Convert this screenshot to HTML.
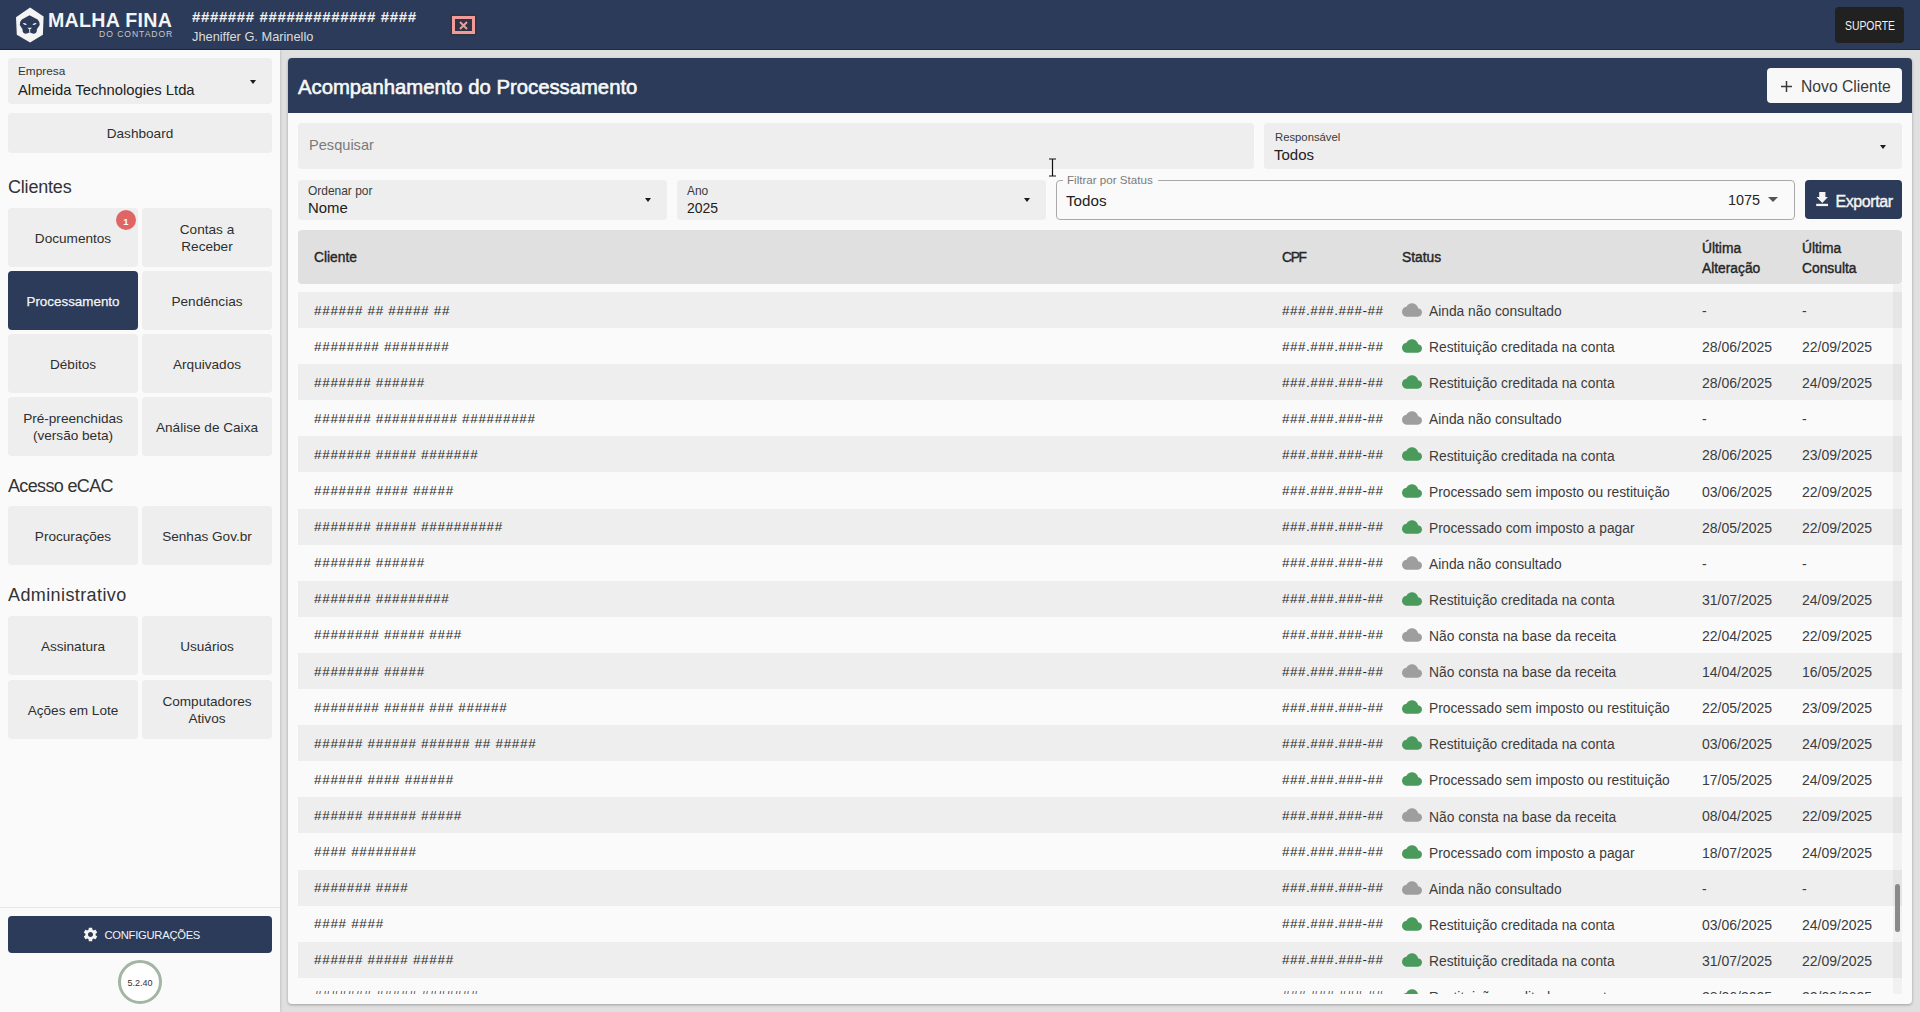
<!DOCTYPE html>
<html><head><meta charset="utf-8">
<style>
*{box-sizing:border-box;margin:0;padding:0}
html,body{width:1920px;height:1012px;overflow:hidden}
body{position:relative;background:#e0e0e0;font-family:"Liberation Sans",sans-serif;color:#212121}
.abs{position:absolute}
.t{position:absolute;white-space:nowrap;line-height:1}
#hdr{left:0;top:0;width:1920px;height:50px;background:#2b3b59;border-bottom:1px solid #1e2a40}
#side{left:0;top:50px;width:280px;height:962px;background:#fafafa;box-shadow:1px 0 2px rgba(0,0,0,.12)}
.btn{position:absolute;background:#eeeeee;border-radius:4px;display:flex;align-items:center;justify-content:center;text-align:center;font-size:13.6px;line-height:17px;color:#2e2e2e;padding-top:1.5px}
.sec{position:absolute;left:8px;font-size:18px;color:#333;white-space:nowrap;line-height:1}
#card{left:288px;top:58px;width:1624px;height:946px;background:#fafafa;border-radius:4px;box-shadow:0 1px 3px rgba(0,0,0,.3);overflow:hidden}
#chdr{left:0;top:0;width:1624px;height:55px;background:#2b3b59}
.fld{position:absolute;background:#eeeeee;border-radius:4px}
.lbl{position:absolute;font-size:12px;color:#3a3a3a;white-space:nowrap;line-height:1}
.val{position:absolute;font-size:15px;color:#212121;white-space:nowrap;line-height:1}
.arr{position:absolute;width:0;height:0;border-left:3.8px solid transparent;border-right:3.8px solid transparent;border-top:4px solid #1a1a1a;margin-top:0.6px}
#thead{left:10px;top:172px;width:1604px;height:54px;background:#e0e0e0;border-radius:4px}
.th{position:absolute;font-size:13.8px;font-weight:400;color:#262626;-webkit-text-stroke:0.4px #262626;white-space:nowrap;line-height:19.6px}
#tbody{left:10px;top:226px;width:1604px;height:710px;overflow:hidden}
.row{position:absolute;left:0;width:1604px;height:36.1px}
.row.g{background:#eeeeee}
.c1,.c2,.c3,.c4,.c5{position:absolute;top:0;line-height:36px;white-space:nowrap;color:#262626}
.c1{left:16px;top:0.5px !important;font-size:13.5px;letter-spacing:0.68px;color:#2a2a2a}
.c2{left:984px;top:0.5px !important;font-size:13.5px;letter-spacing:0.5px;color:#2a2a2a}
.c3{left:1131px;top:2.2px !important;font-size:13.8px;color:#3c3c3c}
.c4{left:1404px;top:1px !important;font-size:14px;color:#3c3c3c}
.c5{left:1504px;top:1px !important;font-size:14px;color:#3c3c3c}
.cl{position:absolute;left:1104px;top:8px;width:20px;height:20px}
</style></head><body>

<!-- HEADER -->
<div id="hdr" class="abs">
  <svg class="abs" style="left:10px;top:4px" width="40" height="42" viewBox="0 0 40 42">
    <polygon points="20.1,3.5 33.6,12.4 32.9,30.7 20.1,38.6 6.8,30.7 6,13.3" fill="#f4f4f4"/>
    <path d="M19.5,11.2 L27.6,15.6 Q29.4,17 29.7,21 L26.9,25.3 Q27,29.6 24,29.7 Q21.5,29.6 19.7,28.2 Q17.9,29.6 15.4,29.7 Q12.4,29.6 12.5,25.3 L9.8,21 Q10.1,17 11.8,15.6 Z" fill="#2b3b59"/>
    <path d="M12.8,19.2 Q15.5,18.6 17,20.6 Q14.5,21.8 12.8,19.2 Z" fill="#f4f4f4"/>
    <path d="M26.6,19.2 Q23.9,18.6 22.4,20.6 Q24.9,21.8 26.6,19.2 Z" fill="#f4f4f4"/>
    <path d="M17.3,23.8 L22.1,23.8 L19.7,25.8 Z" fill="#f4f4f4"/>
    <path d="M19.7,25.3 L19.7,28.3" stroke="#f4f4f4" stroke-width="0.9"/>
  </svg>
  <div class="t" style="left:48px;top:11px;font-size:19.6px;font-weight:700;color:#f4f4f4;letter-spacing:0.3px">MALHA FINA</div>
  <div class="t" style="left:99px;top:30px;font-size:8.6px;color:#c9c9c9;letter-spacing:0.95px">DO CONTADOR</div>
  <div class="t" style="left:192px;top:8.5px;font-size:15px;font-weight:700;color:#f2f2f2;letter-spacing:0.62px">####### ############# ####</div>
  <div class="t" style="left:192px;top:30.5px;font-size:12.8px;color:#dcdcdc">Jheniffer G. Marinello</div>
  <div class="abs" style="left:452px;top:16px;width:23px;height:18px;border:3px solid #f09a9a;background:#2e3444;box-shadow:0 0 0 1.5px #30343f"></div>
  <svg class="abs" style="left:459px;top:21px" width="9" height="9" viewBox="0 0 9 9"><path d="M1,1 L8,8 M8,1 L1,8" stroke="#f29a9a" stroke-width="2"/></svg>
  <div class="abs" style="left:1835px;top:7px;width:69px;height:36px;background:#212121;border-radius:4px"></div>
  <div class="t" style="left:1844.5px;top:19.5px;font-size:12.3px;color:#f4f4f4;transform:scaleX(0.845);transform-origin:0 0">SUPORTE</div>
</div>

<!-- SIDEBAR -->
<div id="side" class="abs">
  <div class="fld" style="left:8px;top:8px;width:264px;height:46px"></div>
  <div class="lbl" style="left:18px;top:16px;font-size:11.8px;color:#333">Empresa</div>
  <div class="val" style="left:18px;top:33px;font-size:14.8px">Almeida Technologies Ltda</div>
  <div class="arr" style="left:250px;top:29px"></div>
  <div class="btn" style="left:8px;top:63px;width:264px;height:40px">Dashboard</div>

  <div class="sec" style="top:128px;letter-spacing:-0.2px">Clientes</div>
  <div class="btn" style="left:8px;top:158px;width:130px;height:59px">Documentos</div>
  <div class="abs" style="left:116px;top:160px;width:20px;height:20px;border-radius:50%;background:#e06666;color:#fff;font-size:9.5px;font-weight:700;line-height:23px;text-align:center">1</div>
  <div class="btn" style="left:142px;top:158px;width:130px;height:59px">Contas a<br>Receber</div>
  <div class="btn" style="left:8px;top:221px;width:130px;height:59px;background:#2b3b59;color:#f4f4f4;font-size:13.4px;-webkit-text-stroke:0.25px #f4f4f4">Processamento</div>
  <div class="btn" style="left:142px;top:221px;width:130px;height:59px">Pendências</div>
  <div class="btn" style="left:8px;top:284px;width:130px;height:59px">Débitos</div>
  <div class="btn" style="left:142px;top:284px;width:130px;height:59px">Arquivados</div>
  <div class="btn" style="left:8px;top:347px;width:130px;height:59px">Pré-preenchidas<br>(versão beta)</div>
  <div class="btn" style="left:142px;top:347px;width:130px;height:59px">Análise de Caixa</div>

  <div class="sec" style="top:427px;letter-spacing:-0.65px">Acesso eCAC</div>
  <div class="btn" style="left:8px;top:456px;width:130px;height:59px">Procurações</div>
  <div class="btn" style="left:142px;top:456px;width:130px;height:59px">Senhas Gov.br</div>

  <div class="sec" style="top:536px;letter-spacing:0.4px">Administrativo</div>
  <div class="btn" style="left:8px;top:566px;width:130px;height:59px">Assinatura</div>
  <div class="btn" style="left:142px;top:566px;width:130px;height:59px">Usuários</div>
  <div class="btn" style="left:8px;top:630px;width:130px;height:59px">Ações em Lote</div>
  <div class="btn" style="left:142px;top:630px;width:130px;height:59px">Computadores<br>Ativos</div>

  <div class="abs" style="left:0;top:857px;width:280px;height:1px;background:#e6e6e6"></div>
  <div class="abs" style="left:8px;top:866px;width:264px;height:37px;background:#2b3b59;border-radius:4px"></div>
  <svg class="abs" style="left:82px;top:876px" width="17" height="17" viewBox="0 0 24 24"><path fill="#f4f4f4" d="M19.14,12.94c.04-.3.06-.61.06-.94 0-.32-.02-.64-.07-.94l2.03-1.58c.18-.14.23-.41.12-.61l-1.92-3.32c-.12-.22-.37-.29-.59-.22l-2.39.96c-.5-.38-1.03-.7-1.62-.94l-.36-2.54c-.04-.24-.24-.41-.48-.41h-3.84c-.24 0-.43.17-.47.41l-.36,2.54c-.59.24-1.13.57-1.62.94l-2.39-.96c-.22-.08-.47,0-.59.22L2.74,8.87c-.12.21-.08.47.12.61l2.03,1.58c-.05.3-.09.63-.09.94s.02.64.07.94l-2.03,1.58c-.18.14-.23.41-.12.61l1.92,3.32c.12.22.37.29.59.22l2.39-.96c.5.38,1.03.7,1.62.94l.36,2.54c.05.24.24.41.48.41h3.84c.24,0,.44-.17.47-.41l.36-2.54c.59-.24,1.13-.56,1.62-.94l2.39.96c.22.08.47,0,.59-.22l1.92-3.32c.12-.22.07-.47-.12-.61l-2.01-1.58zM12,15.6c-1.98,0-3.6-1.62-3.6-3.6s1.62-3.6,3.6-3.6,3.6,1.62,3.6,3.6-1.62,3.6-3.6,3.6z"/></svg>
  <div class="t" style="left:104.5px;top:879.5px;font-size:11.2px;color:#f4f4f4;letter-spacing:-0.25px">CONFIGURAÇÕES</div>
  <div class="abs" style="left:118px;top:910px;width:44px;height:44px;border-radius:50%;border:3px solid #a3b5a3;background:#fff"></div>
  <div class="t" style="left:127.5px;top:929px;font-size:9px;color:#333">5.2.40</div>
</div>

<!-- MAIN CARD -->
<div id="card" class="abs">
  <div id="chdr" class="abs">
    <div class="t" style="left:10px;top:18.5px;font-size:20.3px;font-weight:400;color:#f8f8f8;-webkit-text-stroke:0.6px #f8f8f8">Acompanhamento do Processamento</div>
    <div class="abs" style="left:1479px;top:10px;width:135px;height:35px;background:#f8f8f8;border-radius:4px"></div>
    <svg class="abs" style="left:1493px;top:23px" width="11" height="11" viewBox="0 0 11 11"><path d="M5.5,0 V11 M0,5.5 H11" stroke="#3a3a3a" stroke-width="1.5"/></svg>
    <div class="t" style="left:1513px;top:21px;font-size:15.7px;color:#3a3a3a">Novo Cliente</div>
  </div>

  <div class="fld" style="left:10px;top:65px;width:956px;height:46px"></div>
  <div class="val" style="left:21px;top:80px;font-size:14.6px;color:#7a7a7a">Pesquisar</div>

  <div class="fld" style="left:976px;top:65px;width:638px;height:46px"></div>
  <div class="lbl" style="left:987px;top:74px;font-size:11.3px">Responsável</div>
  <div class="val" style="left:986px;top:89px;font-size:15px">Todos</div>
  <div class="arr" style="left:1592px;top:86px"></div>

  <div class="fld" style="left:10px;top:122px;width:369px;height:40px"></div>
  <div class="lbl" style="left:20px;top:128px;font-size:11.96px">Ordenar por</div>
  <div class="val" style="left:20px;top:143px;font-size:14.9px">Nome</div>
  <div class="arr" style="left:357px;top:139px"></div>

  <div class="fld" style="left:389px;top:122px;width:369px;height:40px"></div>
  <div class="lbl" style="left:399px;top:128px;font-size:11.96px">Ano</div>
  <div class="val" style="left:399px;top:143px;font-size:14px">2025</div>
  <div class="arr" style="left:736px;top:139px"></div>

  <div class="abs" style="left:768px;top:122px;width:739px;height:39.5px;border:1px solid #a9a9a9;border-radius:4px"></div>
  <div class="abs" style="left:775px;top:118px;width:95px;height:8px;background:#fafafa"></div>
  <div class="lbl" style="left:779px;top:116px;font-size:11.6px;color:#7a7a7a">Filtrar por Status</div>
  <div class="val" style="left:778px;top:135px;font-size:15.2px">Todos</div>
  <div class="val" style="left:1440px;top:135px;font-size:14.4px;color:#262626">1075</div>
  <div class="arr" style="left:1480px;top:138px;border-left-width:5px;border-right-width:5px;border-top:5px solid #555"></div>

  <div class="abs" style="left:1517px;top:122px;width:97px;height:39px;background:#2b3b59;border-radius:4px"></div>
  <svg class="abs" style="left:1528px;top:134px" width="12" height="15" viewBox="0 0 12 15"><path d="M3.2,0 H9.4 V5 H11.9 L6.3,10.9 L0.5,5 H3.2 Z" fill="#f4f4f4"/><rect x="0.2" y="11.8" width="11.8" height="2.3" fill="#f4f4f4"/></svg>
  <div class="t" style="left:1547.5px;top:135.5px;font-size:16px;letter-spacing:-0.4px;font-weight:400;color:#f4f4f4;-webkit-text-stroke:0.4px #f4f4f4">Exportar</div>

  <div id="thead" class="abs">
    <div class="th" style="left:16px;top:18px">Cliente</div>
    <div class="th" style="left:984px;top:18px;letter-spacing:-1.3px">CPF</div>
    <div class="th" style="left:1104px;top:18px">Status</div>
    <div class="th" style="left:1404px;top:9px">Última<br>Alteração</div>
    <div class="th" style="left:1504px;top:9px">Última<br>Consulta</div>
  </div>

  <div id="tbody" class="abs">
    <div class="row g" style="top:8.00px"><div class="c1">###### ## ##### ##</div><div class="c2">###.###.###-##</div><svg class="cl" viewBox="0 0 24 24"><path fill="#9e9e9e" d="M19.35 10.04C18.67 6.59 15.64 4 12 4 9.11 4 6.6 5.64 5.35 8.04 2.34 8.36 0 10.91 0 14c0 3.31 2.69 6 6 6h13c2.76 0 5-2.24 5-5 0-2.64-2.05-4.78-4.65-4.96z"/></svg><div class="c3">Ainda não consultado</div><div class="c4">-</div><div class="c5">-</div></div>
    <div class="row" style="top:44.10px"><div class="c1">######## ########</div><div class="c2">###.###.###-##</div><svg class="cl" viewBox="0 0 24 24"><path fill="#4a9a5c" d="M19.35 10.04C18.67 6.59 15.64 4 12 4 9.11 4 6.6 5.64 5.35 8.04 2.34 8.36 0 10.91 0 14c0 3.31 2.69 6 6 6h13c2.76 0 5-2.24 5-5 0-2.64-2.05-4.78-4.65-4.96z"/></svg><div class="c3">Restituição creditada na conta</div><div class="c4">28/06/2025</div><div class="c5">22/09/2025</div></div>
    <div class="row g" style="top:80.20px"><div class="c1">####### ######</div><div class="c2">###.###.###-##</div><svg class="cl" viewBox="0 0 24 24"><path fill="#4a9a5c" d="M19.35 10.04C18.67 6.59 15.64 4 12 4 9.11 4 6.6 5.64 5.35 8.04 2.34 8.36 0 10.91 0 14c0 3.31 2.69 6 6 6h13c2.76 0 5-2.24 5-5 0-2.64-2.05-4.78-4.65-4.96z"/></svg><div class="c3">Restituição creditada na conta</div><div class="c4">28/06/2025</div><div class="c5">24/09/2025</div></div>
    <div class="row" style="top:116.30px"><div class="c1">####### ########## #########</div><div class="c2">###.###.###-##</div><svg class="cl" viewBox="0 0 24 24"><path fill="#9e9e9e" d="M19.35 10.04C18.67 6.59 15.64 4 12 4 9.11 4 6.6 5.64 5.35 8.04 2.34 8.36 0 10.91 0 14c0 3.31 2.69 6 6 6h13c2.76 0 5-2.24 5-5 0-2.64-2.05-4.78-4.65-4.96z"/></svg><div class="c3">Ainda não consultado</div><div class="c4">-</div><div class="c5">-</div></div>
    <div class="row g" style="top:152.40px"><div class="c1">####### ##### #######</div><div class="c2">###.###.###-##</div><svg class="cl" viewBox="0 0 24 24"><path fill="#4a9a5c" d="M19.35 10.04C18.67 6.59 15.64 4 12 4 9.11 4 6.6 5.64 5.35 8.04 2.34 8.36 0 10.91 0 14c0 3.31 2.69 6 6 6h13c2.76 0 5-2.24 5-5 0-2.64-2.05-4.78-4.65-4.96z"/></svg><div class="c3">Restituição creditada na conta</div><div class="c4">28/06/2025</div><div class="c5">23/09/2025</div></div>
    <div class="row" style="top:188.50px"><div class="c1">####### #### #####</div><div class="c2">###.###.###-##</div><svg class="cl" viewBox="0 0 24 24"><path fill="#4a9a5c" d="M19.35 10.04C18.67 6.59 15.64 4 12 4 9.11 4 6.6 5.64 5.35 8.04 2.34 8.36 0 10.91 0 14c0 3.31 2.69 6 6 6h13c2.76 0 5-2.24 5-5 0-2.64-2.05-4.78-4.65-4.96z"/></svg><div class="c3">Processado sem imposto ou restituição</div><div class="c4">03/06/2025</div><div class="c5">22/09/2025</div></div>
    <div class="row g" style="top:224.60px"><div class="c1">####### ##### ##########</div><div class="c2">###.###.###-##</div><svg class="cl" viewBox="0 0 24 24"><path fill="#4a9a5c" d="M19.35 10.04C18.67 6.59 15.64 4 12 4 9.11 4 6.6 5.64 5.35 8.04 2.34 8.36 0 10.91 0 14c0 3.31 2.69 6 6 6h13c2.76 0 5-2.24 5-5 0-2.64-2.05-4.78-4.65-4.96z"/></svg><div class="c3">Processado com imposto a pagar</div><div class="c4">28/05/2025</div><div class="c5">22/09/2025</div></div>
    <div class="row" style="top:260.70px"><div class="c1">####### ######</div><div class="c2">###.###.###-##</div><svg class="cl" viewBox="0 0 24 24"><path fill="#9e9e9e" d="M19.35 10.04C18.67 6.59 15.64 4 12 4 9.11 4 6.6 5.64 5.35 8.04 2.34 8.36 0 10.91 0 14c0 3.31 2.69 6 6 6h13c2.76 0 5-2.24 5-5 0-2.64-2.05-4.78-4.65-4.96z"/></svg><div class="c3">Ainda não consultado</div><div class="c4">-</div><div class="c5">-</div></div>
    <div class="row g" style="top:296.80px"><div class="c1">####### #########</div><div class="c2">###.###.###-##</div><svg class="cl" viewBox="0 0 24 24"><path fill="#4a9a5c" d="M19.35 10.04C18.67 6.59 15.64 4 12 4 9.11 4 6.6 5.64 5.35 8.04 2.34 8.36 0 10.91 0 14c0 3.31 2.69 6 6 6h13c2.76 0 5-2.24 5-5 0-2.64-2.05-4.78-4.65-4.96z"/></svg><div class="c3">Restituição creditada na conta</div><div class="c4">31/07/2025</div><div class="c5">24/09/2025</div></div>
    <div class="row" style="top:332.90px"><div class="c1">######## ##### ####</div><div class="c2">###.###.###-##</div><svg class="cl" viewBox="0 0 24 24"><path fill="#9e9e9e" d="M19.35 10.04C18.67 6.59 15.64 4 12 4 9.11 4 6.6 5.64 5.35 8.04 2.34 8.36 0 10.91 0 14c0 3.31 2.69 6 6 6h13c2.76 0 5-2.24 5-5 0-2.64-2.05-4.78-4.65-4.96z"/></svg><div class="c3">Não consta na base da receita</div><div class="c4">22/04/2025</div><div class="c5">22/09/2025</div></div>
    <div class="row g" style="top:369.00px"><div class="c1">######## #####</div><div class="c2">###.###.###-##</div><svg class="cl" viewBox="0 0 24 24"><path fill="#9e9e9e" d="M19.35 10.04C18.67 6.59 15.64 4 12 4 9.11 4 6.6 5.64 5.35 8.04 2.34 8.36 0 10.91 0 14c0 3.31 2.69 6 6 6h13c2.76 0 5-2.24 5-5 0-2.64-2.05-4.78-4.65-4.96z"/></svg><div class="c3">Não consta na base da receita</div><div class="c4">14/04/2025</div><div class="c5">16/05/2025</div></div>
    <div class="row" style="top:405.10px"><div class="c1">######## ##### ### ######</div><div class="c2">###.###.###-##</div><svg class="cl" viewBox="0 0 24 24"><path fill="#4a9a5c" d="M19.35 10.04C18.67 6.59 15.64 4 12 4 9.11 4 6.6 5.64 5.35 8.04 2.34 8.36 0 10.91 0 14c0 3.31 2.69 6 6 6h13c2.76 0 5-2.24 5-5 0-2.64-2.05-4.78-4.65-4.96z"/></svg><div class="c3">Processado sem imposto ou restituição</div><div class="c4">22/05/2025</div><div class="c5">23/09/2025</div></div>
    <div class="row g" style="top:441.20px"><div class="c1">###### ###### ###### ## #####</div><div class="c2">###.###.###-##</div><svg class="cl" viewBox="0 0 24 24"><path fill="#4a9a5c" d="M19.35 10.04C18.67 6.59 15.64 4 12 4 9.11 4 6.6 5.64 5.35 8.04 2.34 8.36 0 10.91 0 14c0 3.31 2.69 6 6 6h13c2.76 0 5-2.24 5-5 0-2.64-2.05-4.78-4.65-4.96z"/></svg><div class="c3">Restituição creditada na conta</div><div class="c4">03/06/2025</div><div class="c5">24/09/2025</div></div>
    <div class="row" style="top:477.30px"><div class="c1">###### #### ######</div><div class="c2">###.###.###-##</div><svg class="cl" viewBox="0 0 24 24"><path fill="#4a9a5c" d="M19.35 10.04C18.67 6.59 15.64 4 12 4 9.11 4 6.6 5.64 5.35 8.04 2.34 8.36 0 10.91 0 14c0 3.31 2.69 6 6 6h13c2.76 0 5-2.24 5-5 0-2.64-2.05-4.78-4.65-4.96z"/></svg><div class="c3">Processado sem imposto ou restituição</div><div class="c4">17/05/2025</div><div class="c5">24/09/2025</div></div>
    <div class="row g" style="top:513.40px"><div class="c1">###### ###### #####</div><div class="c2">###.###.###-##</div><svg class="cl" viewBox="0 0 24 24"><path fill="#9e9e9e" d="M19.35 10.04C18.67 6.59 15.64 4 12 4 9.11 4 6.6 5.64 5.35 8.04 2.34 8.36 0 10.91 0 14c0 3.31 2.69 6 6 6h13c2.76 0 5-2.24 5-5 0-2.64-2.05-4.78-4.65-4.96z"/></svg><div class="c3">Não consta na base da receita</div><div class="c4">08/04/2025</div><div class="c5">22/09/2025</div></div>
    <div class="row" style="top:549.50px"><div class="c1">#### ########</div><div class="c2">###.###.###-##</div><svg class="cl" viewBox="0 0 24 24"><path fill="#4a9a5c" d="M19.35 10.04C18.67 6.59 15.64 4 12 4 9.11 4 6.6 5.64 5.35 8.04 2.34 8.36 0 10.91 0 14c0 3.31 2.69 6 6 6h13c2.76 0 5-2.24 5-5 0-2.64-2.05-4.78-4.65-4.96z"/></svg><div class="c3">Processado com imposto a pagar</div><div class="c4">18/07/2025</div><div class="c5">24/09/2025</div></div>
    <div class="row g" style="top:585.60px"><div class="c1">####### ####</div><div class="c2">###.###.###-##</div><svg class="cl" viewBox="0 0 24 24"><path fill="#9e9e9e" d="M19.35 10.04C18.67 6.59 15.64 4 12 4 9.11 4 6.6 5.64 5.35 8.04 2.34 8.36 0 10.91 0 14c0 3.31 2.69 6 6 6h13c2.76 0 5-2.24 5-5 0-2.64-2.05-4.78-4.65-4.96z"/></svg><div class="c3">Ainda não consultado</div><div class="c4">-</div><div class="c5">-</div></div>
    <div class="row" style="top:621.70px"><div class="c1">#### ####</div><div class="c2">###.###.###-##</div><svg class="cl" viewBox="0 0 24 24"><path fill="#4a9a5c" d="M19.35 10.04C18.67 6.59 15.64 4 12 4 9.11 4 6.6 5.64 5.35 8.04 2.34 8.36 0 10.91 0 14c0 3.31 2.69 6 6 6h13c2.76 0 5-2.24 5-5 0-2.64-2.05-4.78-4.65-4.96z"/></svg><div class="c3">Restituição creditada na conta</div><div class="c4">03/06/2025</div><div class="c5">24/09/2025</div></div>
    <div class="row g" style="top:657.80px"><div class="c1">###### ##### #####</div><div class="c2">###.###.###-##</div><svg class="cl" viewBox="0 0 24 24"><path fill="#4a9a5c" d="M19.35 10.04C18.67 6.59 15.64 4 12 4 9.11 4 6.6 5.64 5.35 8.04 2.34 8.36 0 10.91 0 14c0 3.31 2.69 6 6 6h13c2.76 0 5-2.24 5-5 0-2.64-2.05-4.78-4.65-4.96z"/></svg><div class="c3">Restituição creditada na conta</div><div class="c4">31/07/2025</div><div class="c5">22/09/2025</div></div>
    <div class="row" style="top:693.90px"><div class="c1">####### ##### #######</div><div class="c2">###.###.###-##</div><svg class="cl" viewBox="0 0 24 24"><path fill="#4a9a5c" d="M19.35 10.04C18.67 6.59 15.64 4 12 4 9.11 4 6.6 5.64 5.35 8.04 2.34 8.36 0 10.91 0 14c0 3.31 2.69 6 6 6h13c2.76 0 5-2.24 5-5 0-2.64-2.05-4.78-4.65-4.96z"/></svg><div class="c3">Restituição creditada na conta</div><div class="c4">28/06/2025</div><div class="c5">22/09/2025</div></div>
    <div class="abs" style="left:1594.5px;top:0;width:9.5px;height:710px;background:rgba(0,0,0,0.035)"></div>
    <div class="abs" style="left:1597px;top:600px;width:5px;height:48px;background:#8a8a8a;border-radius:3px"></div>
  </div>
</div>

<!-- text cursor -->
<svg class="abs" style="left:1048px;top:158px" width="9" height="19" viewBox="0 0 9 19"><path d="M1,1 H8 M4.5,1 V18 M1,18 H8" stroke="#111" stroke-width="1.2" fill="none"/></svg>
</body></html>
